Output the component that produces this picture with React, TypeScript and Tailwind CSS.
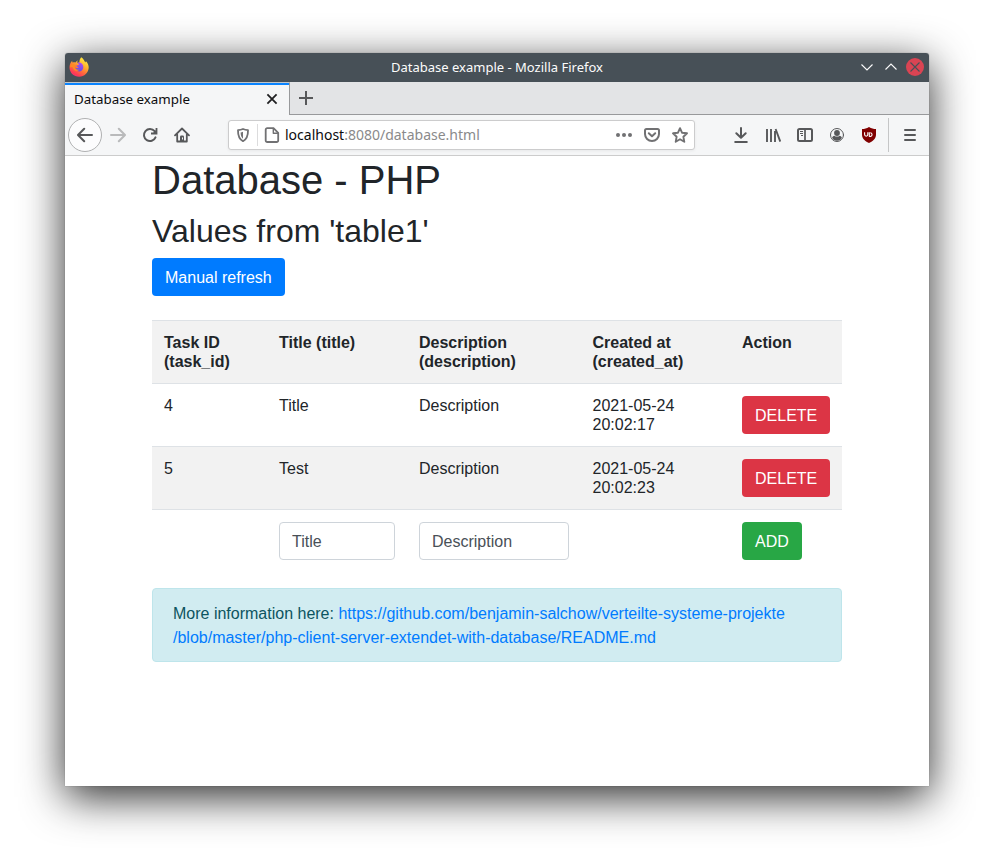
import type { ReactNode } from "react";

function Icon({ children, className = "" }: { children: ReactNode; className?: string }) {
  return (
    <svg width="16" height="16" viewBox="0 0 16 16" fill="none" stroke="currentColor" strokeWidth="2" strokeLinecap="round" strokeLinejoin="round" className={"shrink-0 " + className}>
      {children}
    </svg>
  );
}

function FirefoxLogo() {
  return (
    <svg width="20" height="20" viewBox="0 0 20 20" className="mb-[2px] shrink-0">
      <defs>
        <linearGradient id="fire" x1="0.8" y1="0.05" x2="0.25" y2="1">
          <stop offset="0" stopColor="#fff044" />
          <stop offset="0.35" stopColor="#ffb02e" />
          <stop offset="0.6" stopColor="#ff7139" />
          <stop offset="0.85" stopColor="#ff3a55" />
          <stop offset="1" stopColor="#f5307c" />
        </linearGradient>
        <linearGradient id="globe" x1="0.7" y1="0" x2="0.3" y2="1">
          <stop offset="0" stopColor="#b04bf5" />
          <stop offset="1" stopColor="#5a4fe0" />
        </linearGradient>
      </defs>
      <path d="M12.2 0.2C14.3 1.5 15.2 3.2 15.6 4.6C16.1 4.7 16.3 4.9 16.8 5.5C17 5 17 4.5 16.8 4C18.8 5.9 19.8 8.2 19.7 10.8C19.4 15.8 15.4 19.7 10.2 19.8C5 19.8 0.8 16 0.5 10.8C0.4 8.4 1.2 5.7 3.2 3.8C3.1 4.5 3.3 5.1 3.6 5.6C4.7 5.1 5.8 5.2 6.6 5.5C7.1 4.3 8 3.7 8.9 3.4C8.3 4.3 8.1 5.1 8.2 5.8L10.4 5.6C10.2 3.7 10.9 1.6 12.2 0.2Z" fill="url(#fire)" />
      <path d="M10.4 5.6C13 6 14.6 8 14.3 10.7C14 13.1 12.2 14.4 10.1 14.4C7.6 14.3 6 12.7 6 10.6C7.1 11.4 8.6 11.3 9.7 10.3C8.6 10.1 7.8 9.5 7.2 8.8C7.8 8.1 9.5 8.2 10.2 7.7C9.5 7 9.3 6.4 8.2 5.8Z" fill="url(#globe)" />
      <path d="M1.2 8.5C2.5 6.7 5 6.4 7.2 8.8C6.2 8.6 5.6 9.5 6 10.6C6.4 12.1 8.1 13.1 10.3 12.5C8.9 14.9 5 14.2 4.1 11.3C3.6 9.8 2.5 9.5 1.2 10.5Z" fill="#ff8a24" />
    </svg>
  );
}

function TitleBar() {
  return (
    <div className="flex h-[29px] items-center rounded-t-[3px] bg-[#475057] pl-1 pr-[5px] font-['Noto_Sans',sans-serif] text-[#fcfcfc]">
      <div className="flex w-[74px] items-center">
        <FirefoxLogo />
      </div>
      <div className="flex-1 pl-px text-center text-[13px]">Database example - Mozilla Firefox</div>
      <div className="flex w-[74px] items-center justify-end gap-[6px] pb-px">
        <svg width="18" height="18" viewBox="0 0 18 18" fill="none" stroke="currentColor" strokeWidth="1.1"><path d="M3.5 6.5 9 12l5.5-5.5" /></svg>
        <svg width="18" height="18" viewBox="0 0 18 18" fill="none" stroke="currentColor" strokeWidth="1.1"><path d="M3.5 11.5 9 6l5.5 5.5" /></svg>
        <svg width="18" height="18" viewBox="0 0 18 18" fill="none" stroke="#475057" strokeWidth="1.1"><circle cx="9" cy="9" r="9" fill="#da4453" stroke="none" /><path d="m4.5 4.5 9 9m0-9-9 9" /></svg>
      </div>
    </div>
  );
}

function TabBar() {
  return (
    <div className="flex h-[33px] bg-[#e3e4e6] font-['Noto_Sans',sans-serif]">
      <div className="flex w-[225px] flex-col border-r border-t border-r-[#98999b] border-t-[#c4c6c8] bg-[#f5f6f7]">
        <div className="h-[2px] bg-[#0a84ff]" />
        <div className="flex flex-1 items-center justify-between pb-px pl-[9px] pr-[9px] text-[13.33px] text-[#0c0c0d]">
          <span>Database example</span>
          <Icon className="mb-[2px] text-[#202022]"><path strokeWidth="1.8" strokeLinecap="butt" d="m3.4 3.4 9.2 9.2m0-9.2-9.2 9.2" /></Icon>
        </div>
      </div>
      <div className="flex flex-1 items-center border-b border-[#98999b] pl-2 text-[#57585a]">
        <Icon><path d="M8 1v14M1 8h14" strokeLinecap="butt" /></Icon>
      </div>
    </div>
  );
}

function AddressBar() {
  return (
    <div className="ml-[38px] flex h-[30px] w-[467px] items-center rounded-[3px] border border-[#cccccd] bg-white pl-[6px] pr-[6px] text-[#717173] shadow-[0_1px_3px_rgba(0,0,0,0.06)]">
      <Icon>
        <path strokeWidth="1.8" d="M8 2c1.700.8 3.500 1.100 5 1.200.1 5.300-1 8.800-5 11C4 12 2.900 8.500 3 3.200 4.500 3.100 6.300 2.800 8 2Z" />
        <path d="M8 4.800c-.9.4-1.600.6-2.400.7.1 3 .7 4.800 2.400 6.200Z" fill="currentColor" stroke="none" />
      </Icon>
      <div className="ml-[6px] h-[22px] w-px bg-[#dcdcdd]" />
      <Icon className="ml-[6px]">
        <path strokeWidth="1.800" d="M3.200 1.200h6.300l4.700 4.700v7.600a1.500 1.500 0 0 1-1.500 1.500H3.200a1.500 1.500 0 0 1-1.500-1.500V2.700a1.500 1.500 0 0 1 1.500-1.500Z" />
        <path strokeWidth="1.400" d="M9.300 1.500v4.700H14" />
      </Icon>
      <div className="ml-[5px] flex-1 pb-px font-['Noto_Sans',sans-serif] text-[14px] text-[#8a8a8b]">
        <span className="text-[#0c0c0d]">localhost</span>:8080/database.html
      </div>
      <div className="flex gap-3">
        <Icon><g fill="currentColor" stroke="none"><circle cx="2" cy="8" r="2" /><circle cx="8" cy="8" r="2" /><circle cx="14" cy="8" r="2" /></g></Icon>
        <Icon><path d="M2.500 2h11a1.500 1.500 0 0 1 1.500 1.500V7A7 7 0 0 1 1 7V3.500A1.500 1.500 0 0 1 2.500 2Z" /><path d="M4.800 6.300 8 9.300l3.200-3" /></Icon>
        <Icon><path strokeWidth="1.900" d="m8 1.200 2 4.500 5 .6-3.600 3.500.9 5L8 12.300l-4.300 2.500.9-5L1 6.300l5-.6Z" /></Icon>
      </div>
    </div>
  );
}

function Toolbar() {
  return (
    <div className="flex h-[41px] items-center border-b border-[#cccccc] bg-[#f5f6f7] pl-[3px] text-[#57585a]">
      <div className="flex size-[34px] items-center justify-center rounded-full border border-[#b0b1b2] bg-[#fcfcfd]">
        <Icon><path d="M15 8H1.500M7.200 1.700 1 8l6.200 6.300" /></Icon>
      </div>
      <Icon className="ml-2 text-[#b9babb]"><path d="M1 8h13.500M8.800 1.700 15 8l-6.200 6.300" /></Icon>
      <Icon className="ml-4"><path d="M12.600 4.200A6 6 0 1 0 13.500 10.300" /><path strokeLinecap="butt" strokeLinejoin="miter" strokeWidth="1.800" d="M14.500 1v5.500H9" /><path d="M14.500 2.500v4h-4Z" fill="currentColor" stroke="none" /></Icon>
      <Icon className="ml-4">
        <path strokeWidth="1.800" d="M1 8.300 8 1.500l7 6.800M3.200 7.500v7h9.600v-7" />
        <path d="M6 14.500V9.800A1.300 1.300 0 0 1 7.300 8.500h1.400A1.300 1.300 0 0 1 10 9.800v4.700Z" fill="currentColor" stroke="none" />
        <path d="M8.500 10.800v1.300" stroke="#f5f6f7" strokeWidth="1" />
      </Icon>
      <AddressBar />
      <div className="ml-[38px] flex items-center gap-4">
        <Icon><path d="M8 1v9.500M3.300 6.200 8 10.800l4.700-4.600M2.200 15h11.600" /></Icon>
        <Icon><path strokeLinecap="butt" d="M2 2v13M6 2v13M10 4v11M10.600 2l4.700 12.600" strokeWidth="1.900" /></Icon>
        <Icon><rect x="1" y="2" width="14" height="12" rx="1.500" /><path strokeWidth="1.700" strokeLinecap="butt" d="M8 2v12" /><path strokeWidth="1" strokeLinecap="butt" d="M3 4.500h3M3 6.500h3M4 8.500h2" /></Icon>
        <Icon>
          <circle cx="8" cy="8" r="6.500" strokeWidth="1" />
          <circle cx="8" cy="6" r="2.900" fill="currentColor" stroke="none" />
          <path d="M5.300 8.700c1.500 1.200 3.900 1.200 5.400 0 1 .2 1.900.9 2.200 1.800a5.300 5.300 0 0 1-9.800 0c.3-.9 1.200-1.600 2.200-1.800Z" fill="currentColor" stroke="none" />
        </Icon>
        <svg width="16" height="16" viewBox="0 0 16 16">
          <path d="M8 0C5.500 1.500 3.500 2 1 2v5.500c0 4.200 2.800 6.500 7 8.500 4.200-2 7-4.300 7-8.500V2C12.500 2 10.500 1.500 8 0Z" fill="#800000" />
          <path d="M3.600 5.300v2.300a1.600 1.600 0 0 0 3.200 0V5.300M8.300 5.300v4a1.900 1.900 0 1 0 1-3.600" fill="none" stroke="#fff" strokeWidth="1.100" />
        </svg>
      </div>
      <div className="ml-[11px] h-[34px] w-px bg-[#c5c6c7]" />
      <Icon className="ml-[13px]"><path d="M3 3h10M3 8h10M3 13h10" /></Icon>
    </div>
  );
}

const columns = ["Task ID (task_id)", "Title (title)", "Description (description)", "Created at (created_at)", "Action"];
const rows = [
  { id: 4, title: "Title", description: "Description", created: "2021-05-24 20:02:17" },
  { id: 5, title: "Test", description: "Description", created: "2021-05-24 20:02:23" },
];
const button = "block h-[38px] rounded-[4px] px-[13px] pt-[2px] text-base leading-6 text-white";
const cell = "border-t border-[#dee2e6] p-3 text-left align-top ";
const input = "block h-[38px] w-full rounded-[4px] border border-[#ced4da] bg-white px-3 pt-[2px] text-base placeholder:text-[#495057] placeholder:opacity-100";

function TaskTable() {
  return (
    <table className="mt-6 w-[690px] table-fixed border-separate border-spacing-0 text-base leading-[19px]">
      <colgroup>
        <col className="w-[115px]" />
        <col className="w-[140px]" />
        <col className="w-[173.500px]" />
        <col className="w-[149.500px]" />
        <col className="w-[112px]" />
      </colgroup>
      <thead>
        <tr className="bg-[#f2f2f2]">
          {columns.map((c) => (
            <th key={c} className={cell + "font-bold"}>{c}</th>
          ))}
        </tr>
      </thead>
      <tbody>
        {rows.map((r) => (
          <tr key={r.id} className="even:bg-[#f2f2f2]">
            <td className={cell}>{r.id}</td>
            <td className={cell}>{r.title}</td>
            <td className={cell}>{r.description}</td>
            <td className={cell}>{r.created}</td>
            <td className={cell}><button className={button + " bg-[#dc3545]"}>DELETE</button></td>
          </tr>
        ))}
        <tr>
          <td className={cell} />
          <td className={cell}><input className={input} placeholder="Title" /></td>
          <td className={cell}><input className={input} placeholder="Description" /></td>
          <td className={cell} />
          <td className={cell}><button className={button + " bg-[#28a745]"}>ADD</button></td>
        </tr>
      </tbody>
    </table>
  );
}

export default function App() {
  return (
    <div className="h-[863px] w-[994px] overflow-hidden bg-white pl-[65px] pt-[53px]">
      <div className="flex h-[733px] w-[864px] flex-col rounded-t-[3px] bg-white shadow-[0_0_1px_rgba(0,0,0,0.5),0_11px_43px_rgba(0,0,0,0.83)]">
        <TitleBar />
        <TabBar />
        <Toolbar />
        <main className="ml-[87px] w-[690px] font-['Liberation_Sans',Arial,sans-serif] text-[#212529]">
          <h1 className="text-[40px] leading-[48px]">Database - PHP</h1>
          <h2 className="mt-2 text-[32px] leading-[38px]">Values from 'table1'</h2>
          <button className={button + " mt-2 bg-[#007bff]"}>Manual refresh</button>
          <TaskTable />
          <div className="mt-4 rounded-[4px] border border-[#bee5eb] bg-[#d1ecf1] px-5 pb-[11px] pt-[13px] text-base leading-6 text-[#0c5460]">
            More information here: <a className="text-[#007bff]">https://github.com/benjamin-salchow/verteilte-systeme-projekte<br />/blob/master/php-client-server-extendet-with-database/README.md</a>
          </div>
        </main>
      </div>
    </div>
  );
}
